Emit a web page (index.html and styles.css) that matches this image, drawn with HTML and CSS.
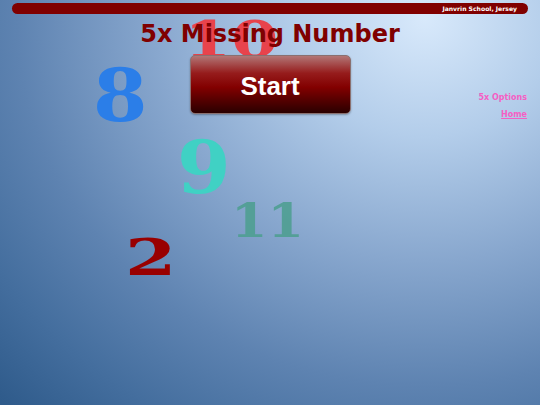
FILE: index.html
```html
<!DOCTYPE html>
<html>
<head>
<meta charset="utf-8">
<link rel="stylesheet" href="styles.css">
</head>
<body>
<div class="stage">
  <div class="numbers">
    <span class="num n10">10</span>
    <span class="num n8">8</span>
    <span class="num n9">9</span>
    <span class="num n11">11</span>
    <span class="num n2">2</span>
  </div>
  <header class="topbar"><span class="school">Janvrin School, Jersey</span></header>
  <h1 class="title">5x Missing Number</h1>
  <main class="content">
    <div class="spacer"></div>
    <button class="start">Start</button>
    <nav class="links">
      <a class="link" href="#">5x Options</a>
      <a class="link home" href="#">Home</a>
    </nav>
  </main>
</div>
</body>
</html>
```
FILE: styles.css
```css
html, body {
  margin: 0;
  padding: 0;
  width: 540px;
  height: 405px;
  overflow: hidden;
}
body {
  font-family: "DejaVu Sans", Verdana, sans-serif;
}
.stage {
  position: relative;
  width: 540px;
  height: 405px;
  background: radial-gradient(ellipse 600px 540px at 425px 18px, #d8e9fb 0%, #b3cdea 22%, #88a7ce 45%, #5e83b1 68%, #446e9e 85%, #2f5b8b 100%);
  overflow: hidden;
}
.numbers {
  position: absolute;
  inset: 0;
}
.num {
  position: absolute;
  font-family: "DejaVu Serif", serif;
  font-weight: bold;
  line-height: 1;
  transform-origin: 0 0;
}
.n10 { left: 184px; top: 14px; font-size: 51px; color: #e8434c; transform: scaleX(1.33); }
.n8 { left: 93px; top: 59px; font-size: 73px; color: #2b7ee8; transform: scaleX(1.07); }
.n9 { left: 177px; top: 132px; font-size: 72px; color: #40d1c4; transform: scaleX(1.07); }
.n11 { left: 231px; top: 198px; font-size: 46px; color: #4f9f92; opacity: 0.9; transform: scaleX(1.14); }
.n2 { left: 125px; top: 233px; font-size: 50px; color: #990000; transform: scaleX(1.48); }

.topbar {
  position: relative;
  margin: 3px 12px 0;
  height: 11px;
  background: #800000;
  border-radius: 6px;
  display: flex;
  justify-content: flex-end;
  align-items: center;
  padding-right: 11px;
}
.school {
  color: #fff;
  font-size: 6.1px;
  font-weight: bold;
}
.title {
  position: relative;
  margin: 5px 0 0;
  text-align: center;
  font-size: 24px;
  font-weight: bold;
  color: #800000;
  line-height: 30px;
}
.content {
  position: relative;
  display: grid;
  grid-template-columns: 1fr 161px 1fr;
  margin-top: 6px;
}
.start {
  height: 59px;
  border: 1px solid #8a7070;
  border-radius: 5px;
  background: linear-gradient(to bottom, #b27676 0%, #961c1c 30%, #820000 55%, #500000 80%, #2a0000 100%);
  color: #fff;
  font-family: "Liberation Sans", Arial, sans-serif;
  font-weight: bold;
  font-size: 26px;
  padding: 3px 0 0;
  box-shadow: 0 1px 2px rgba(0,0,0,0.3);
}
.links {
  display: flex;
  flex-direction: column;
  align-items: flex-end;
  padding: 38px 13px 0 0;
  gap: 7px;
}
.link {
  color: #f55fc4;
  font-size: 8px;
  font-weight: bold;
  text-decoration: none;
  line-height: 10px;
}
.home {
  text-decoration: underline;
}
```
